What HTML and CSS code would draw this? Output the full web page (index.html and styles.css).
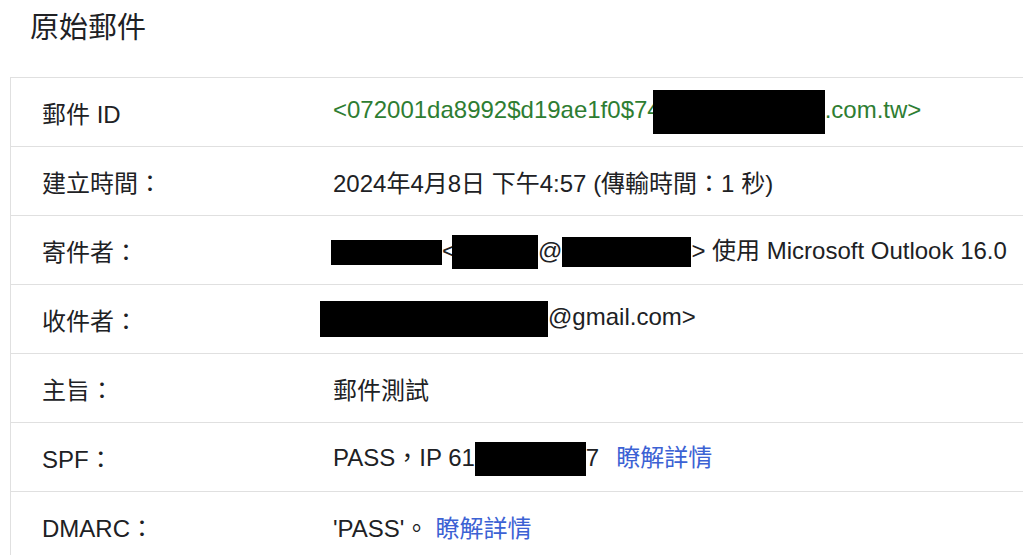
FILE: index.html
```html
<!DOCTYPE html>
<html lang="zh-Hant">
<head>
    <meta charset="UTF-8">
    <title>原始郵件</title>
    <link rel="stylesheet" href="styles.css">
</head>
<body>
    <div class="page">
        <h1>原始郵件</h1>

        <table class="headers">
            <tbody>
                <tr>
                    <td class="label">郵件 ID</td>
                    <td class="value msg-id">&lt;072001da8992$d19ae1f0$74<span class="redact r-id"></span>.com.tw&gt;</td>
                </tr>
                <tr>
                    <td class="label">建立時間：</td>
                    <td class="value">2024年4月8日 下午4:57 (傳輸時間：1 秒)</td>
                </tr>
                <tr>
                    <td class="label">寄件者：</td>
                    <td class="value"><span class="redact r-name"></span>&lt;<span class="redact r-user"></span>@<span class="redact r-domain"></span>&gt; 使用 Microsoft Outlook 16.0</td>
                </tr>
                <tr>
                    <td class="label">收件者：</td>
                    <td class="value"><span class="redact r-to"></span>@gmail.com&gt;</td>
                </tr>
                <tr>
                    <td class="label">主旨：</td>
                    <td class="value">郵件測試</td>
                </tr>
                <tr>
                    <td class="label">SPF：</td>
                    <td class="value">PASS，IP 61<span class="redact r-ip"></span>7<a href="#" class="more more-spf">瞭解詳情</a></td>
                </tr>
                <tr>
                    <td class="label">DMARC：</td>
                    <td class="value">'PASS'。<a href="#" class="more more-dmarc">瞭解詳情</a></td>
                </tr>
            </tbody>
        </table>
    </div>
</body>
</html>
```

FILE: styles.css
```css
body {
    margin: 0;
    font-family: "Liberation Sans", Arial, "Noto Sans CJK TC", sans-serif;
    color: #202124;
    background-color: white;
    overflow: hidden;
}
.page {
    padding-left: 10px;
}
h1 {
    font-size: 29px;
    font-weight: normal;
    line-height: 32px;
    margin: 12px 0 33px 20px;
    color: #202124;
}
.headers {
    width: 100%;
    table-layout: fixed;
    border-collapse: collapse;
    border-top: 1px solid #e0e0e0;
    border-left: 1px solid #e0e0e0;
    font-size: 24px;
}
.headers td {
    height: 68px;
    padding: 0;
    border-bottom: 1px solid #e0e0e0;
    white-space: nowrap;
    vertical-align: middle;
}
.label {
    width: 291px;
    padding-left: 31px !important;
}
.msg-id {
    color: #2e7d32;
}
.redact {
    display: inline-block;
    background-color: #000;
    vertical-align: middle;
}
.r-id {
    width: 172px;
    height: 44px;
    margin-left: -8px;
}
.r-name {
    width: 111px;
    height: 25px;
    margin-left: -2px;
}
.r-user {
    width: 86px;
    height: 34px;
    margin-left: -4px;
}
.r-domain {
    width: 129px;
    height: 30px;
}
.r-to {
    width: 228px;
    height: 36px;
    margin-left: -13px;
}
.r-ip {
    width: 111px;
    height: 34px;
}
.more {
    color: #3c62d4;
    text-decoration: none;
}
.more-spf {
    margin-left: 17px;
}
.more-dmarc {
    margin-left: 7px;
}
```
